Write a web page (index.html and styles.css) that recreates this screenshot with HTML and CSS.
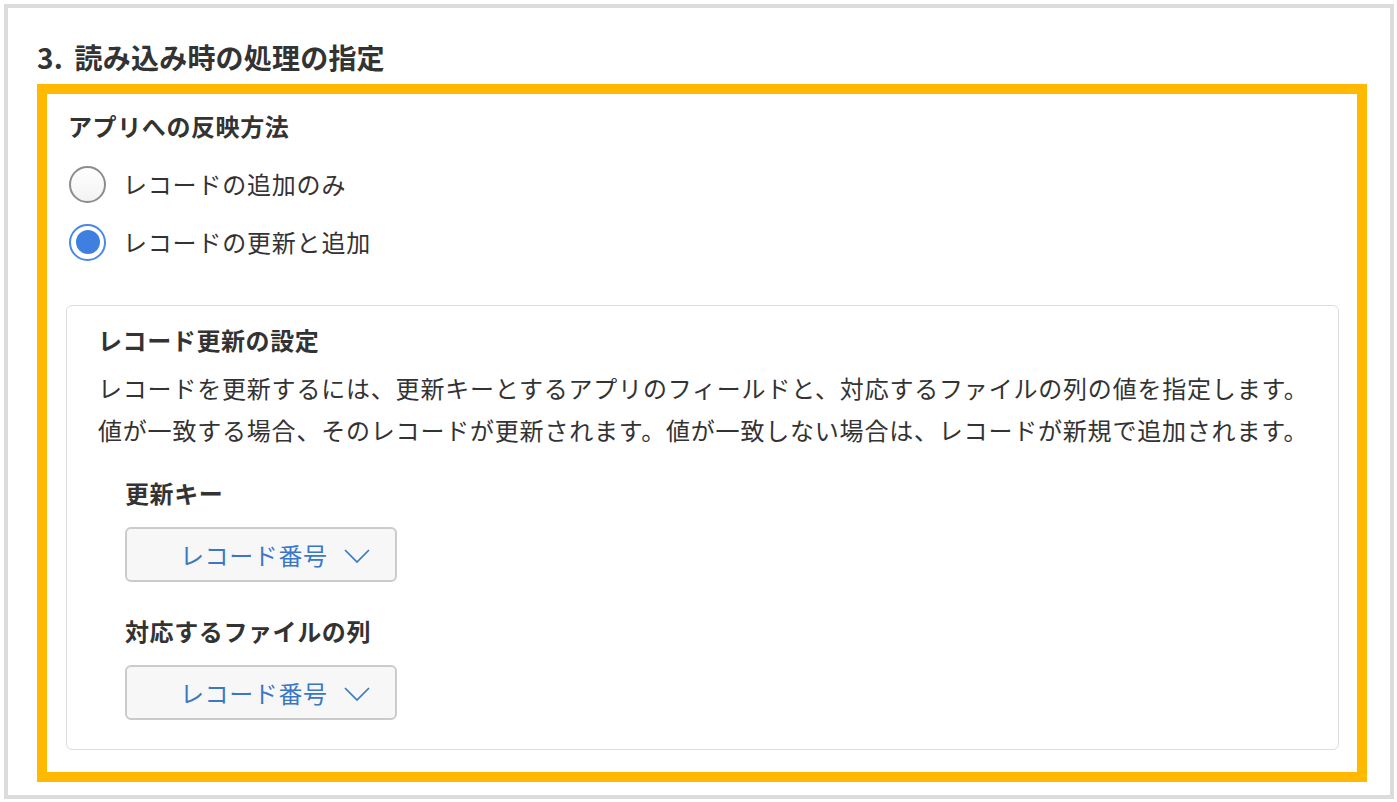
FILE: index.html
```html
<!DOCTYPE html>
<html lang="ja">
<head>
<meta charset="utf-8">
<link rel="stylesheet" href="styles.css">
</head>
<body>
<div class="frame">
  <h2 class="section-title">3. 読み込み時の処理の指定</h2>
  <div class="highlight">
    <div class="group-title">アプリへの反映方法</div>
    <label class="radio-row">
      <span class="radio"></span>
      <span class="radio-label">レコードの追加のみ</span>
    </label>
    <label class="radio-row">
      <span class="radio checked"></span>
      <span class="radio-label">レコードの更新と追加</span>
    </label>
    <div class="panel">
      <div class="panel-title">レコード更新の設定</div>
      <p class="panel-desc">レコードを更新するには、更新キーとするアプリのフィールドと、対応するファイルの列の値を指定します。<br>値が一致する場合、そのレコードが更新されます。値が一致しない場合は、レコードが新規で追加されます。</p>
      <div class="field">
        <div class="field-label">更新キー</div>
        <div class="select">
          <span class="select-text">レコード番号</span>
          <svg class="chevron" width="26" height="14" viewBox="0 0 26 14"><path d="M1 1 L13 13 L25 1" fill="none" stroke="#3a78c6" stroke-width="1.7"/></svg>
        </div>
      </div>
      <div class="field field-second">
        <div class="field-label">対応するファイルの列</div>
        <div class="select">
          <span class="select-text">レコード番号</span>
          <svg class="chevron" width="26" height="14" viewBox="0 0 26 14"><path d="M1 1 L13 13 L25 1" fill="none" stroke="#3a78c6" stroke-width="1.7"/></svg>
        </div>
      </div>
    </div>
  </div>
</div>
</body>
</html>
```

FILE: styles.css
```css
html, body {
  margin: 0;
  padding: 0;
  background: #fff;
}
body {
  font-family: "Noto Sans CJK JP", "Noto Sans", sans-serif;
  color: #333;
}
.frame {
  box-sizing: border-box;
  margin: 4px 0 0 4px;
  width: 1390px;
  height: 795px;
  border: 4px solid #dcdcdc;
  padding: 29px 0 0 29px;
}
.section-title {
  margin: 0;
  font-size: 28px;
  line-height: 40px;
  font-weight: bold;
  color: #333;
  letter-spacing: 0.2px;
  word-spacing: 5px;
}
.highlight {
  box-sizing: border-box;
  margin-top: 7px;
  width: 1330px;
  height: 698px;
  border: 10px solid #ffb900;
  padding: 14px 18px 0 21px;
}
.group-title {
  font-size: 24px;
  line-height: 36px;
  font-weight: bold;
  letter-spacing: 0.6px;
}
.radio-row {
  display: flex;
  align-items: center;
  height: 58px;
  margin-left: 1px;
}
.group-title + .radio-row {
  margin-top: 11px;
}
.radio {
  box-sizing: border-box;
  width: 37px;
  height: 37px;
  border-radius: 50%;
  border: 2px solid #8d8d8d;
  background: linear-gradient(#ffffff, #f2f2f2);
  display: flex;
  align-items: center;
  justify-content: center;
  flex: none;
}
.radio.checked {
  border-color: #4a88e8;
  background: #fff;
}
.radio.checked::after {
  content: "";
  width: 24px;
  height: 24px;
  border-radius: 50%;
  background: #3f7fdf;
}
.radio-label {
  margin-left: 17px;
  font-size: 24px;
  line-height: 36px;
  letter-spacing: 0.8px;
}
.panel {
  box-sizing: border-box;
  margin: 34px 0 0 -2px;
  width: 1273px;
  border: 1px solid #dddddd;
  border-radius: 6px;
  padding: 16px 20px 29px 31px;
}
.panel-title {
  font-size: 24px;
  line-height: 36px;
  font-weight: bold;
  letter-spacing: 0.6px;
}
.panel-desc {
  margin: 9px 0 0;
  font-size: 24px;
  line-height: 42px;
  letter-spacing: 0.8px;
}
.field {
  margin-left: 27px;
  margin-top: 24px;
}
.field-second {
  margin-top: 31px;
}
.field-label {
  font-size: 24px;
  line-height: 36px;
  font-weight: bold;
  letter-spacing: 0.6px;
}
.select {
  box-sizing: border-box;
  margin-top: 16px;
  width: 272px;
  height: 55px;
  border: 2px solid #cbcbcb;
  border-radius: 6px;
  background: #f7f7f7;
  display: flex;
  align-items: center;
  padding-left: 53px;
}
.select-text {
  font-size: 24px;
  letter-spacing: 0.6px;
  color: #3a78c6;
}
.chevron {
  margin-left: 16px;
  margin-top: 2px;
}
```
